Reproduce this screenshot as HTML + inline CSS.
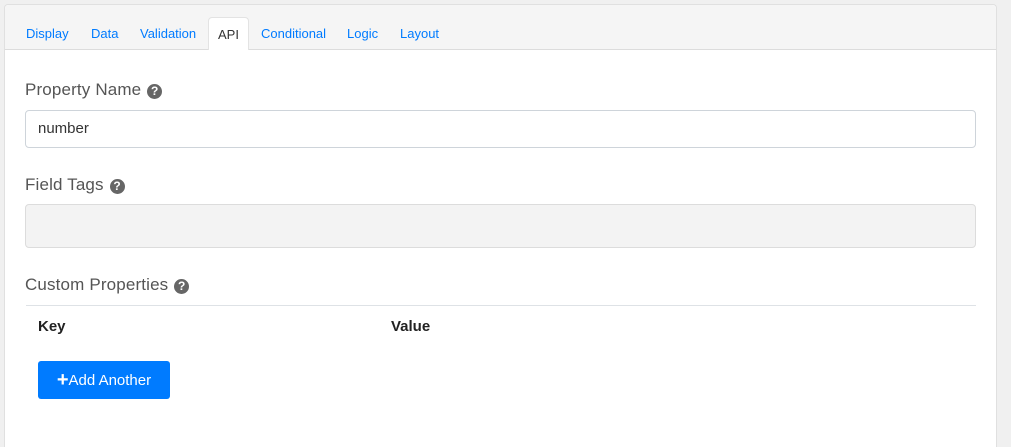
<!DOCTYPE html>
<html><head><style>
html,body{margin:0;width:1011px;height:447px;overflow:hidden}
body{background:#f0f0f0;font-family:"Liberation Sans",sans-serif;position:relative}
.card{position:absolute;left:4px;top:4px;width:991px;height:443px;background:#fff;border:1px solid #e0e0e0;border-bottom:none;border-radius:4px 4px 0 0}
.hdr{position:absolute;left:0;top:0;right:0;height:44px;background:#f5f5f5;border-bottom:1px solid #dcdcdc;border-radius:4px 4px 0 0}
.tab{position:absolute;top:21px;font-size:13px;color:#007bff}
.api{position:absolute;left:203px;top:12px;width:41px;height:33px;background:#fff;border:1px solid #e3e3e3;border-bottom:none;border-radius:4px 4px 0 0;box-sizing:border-box;font-size:13px;color:#333;text-align:center;line-height:33px}
.lbl{position:absolute;left:20px;font-size:17px;color:#555;letter-spacing:0.15px}
.q{display:inline-block;width:15px;height:15px;border-radius:50%;background:#666;color:#fff;font-size:12px;font-weight:bold;text-align:center;line-height:15px;vertical-align:0px;margin-left:1px;letter-spacing:0}
.inp{position:absolute;left:20px;width:951px;box-sizing:border-box;border:1px solid #ced4da;border-radius:4px}
</style></head><body>
<div class="card">
<div class="hdr">
<span class="tab" style="left:21px">Display</span>
<span class="tab" style="left:86px">Data</span>
<span class="tab" style="left:135px">Validation</span>
<div class="api">API</div>
<span class="tab" style="left:256px">Conditional</span>
<span class="tab" style="left:342px">Logic</span>
<span class="tab" style="left:395px">Layout</span>
</div>
<div class="lbl" style="top:75px">Property Name <span class="q">?</span></div>
<div class="inp" style="top:105px;height:38px;font-size:15px;color:#333;padding:9px 12px">number</div>
<div class="lbl" style="top:170px">Field Tags <span class="q">?</span></div>
<div class="inp" style="top:199px;height:44px;background:#f3f3f3;border-color:#dcdcdc"></div>
<div class="lbl" style="top:270px">Custom Properties <span class="q">?</span></div>
<div style="position:absolute;left:21px;top:300px;width:950px;border-top:1px solid #dee2e6"></div>
<div style="position:absolute;left:33px;top:313px;font-size:15px;font-weight:bold;color:#222">Key</div>
<div style="position:absolute;left:386px;top:313px;font-size:15px;font-weight:bold;color:#222">Value</div>
<div style="position:absolute;left:33px;top:356px;width:132px;height:38px;background:#007bff;border-radius:3px;color:#fff;font-size:15px;line-height:38px;text-align:center"><b style="font-size:20px;vertical-align:-1px">+</b>Add Another</div>
</div>
</body></html>
